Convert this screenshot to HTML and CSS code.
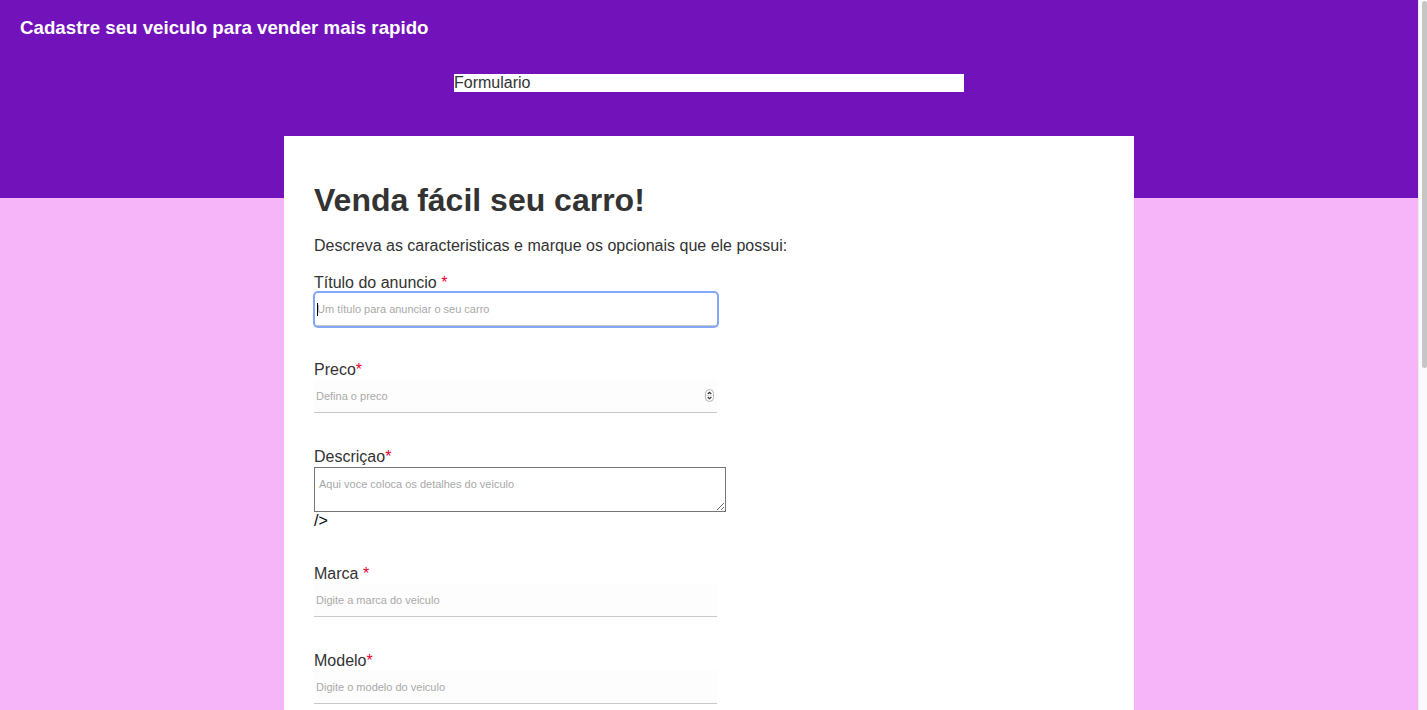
FILE: index.html
```html
<!DOCTYPE html>
<html lang="pt">
<head>
<meta charset="utf-8">
<title>Cadastro de veiculo</title>
<link rel="stylesheet" href="styles.css">
</head>
<body>
<header class="topo">
  <h3 class="topo-titulo">Cadastre seu veiculo para vender mais rapido</h3>
  <div class="topo-barra">Formulario</div>
</header>
<main class="conteudo">
  <form class="cartao">
    <h1 class="cartao-titulo">Venda fácil seu carro!</h1>
    <p class="cartao-texto">Descreva as caracteristicas e marque os opcionais que ele possui:</p>

    <div class="grupo grupo-primeiro">
      <label class="rotulo">Título do anuncio <span class="obrig">*</span></label>
      <div class="campo campo-foco"><span class="cursor"></span><input class="entrada" type="text" placeholder="Um título para anunciar o seu carro"></div>
    </div>

    <div class="grupo">
      <label class="rotulo">Preco<span class="obrig">*</span></label>
      <div class="campo">
        <input class="entrada" type="text" placeholder="Defina o preco">
        <svg class="passo" width="9" height="13" viewBox="0 0 9 13">
          <rect x="0.5" y="0.5" width="8" height="12" rx="4" fill="#fff" stroke="#b5b5b5"/>
          <path d="M2.7 5 L4.5 3.3 L6.3 5" fill="none" stroke="#333" stroke-width="1.1"/>
          <path d="M2.7 8 L4.5 9.7 L6.3 8" fill="none" stroke="#333" stroke-width="1.1"/>
          <line x1="1" y1="6.5" x2="8" y2="6.5" stroke="#e2e2e2"/>
        </svg>
      </div>
    </div>

    <div class="grupo">
      <label class="rotulo">Descriçao<span class="obrig">*</span></label>
      <textarea class="area" placeholder="Aqui voce coloca os detalhes do veiculo"></textarea>
      <div class="sobra">/&gt;</div>
    </div>

    <div class="grupo">
      <label class="rotulo">Marca <span class="obrig">*</span></label>
      <div class="campo"><input class="entrada" type="text" placeholder="Digite a marca do veiculo"></div>
    </div>

    <div class="grupo">
      <label class="rotulo">Modelo<span class="obrig">*</span></label>
      <div class="campo"><input class="entrada" type="text" placeholder="Digite o modelo do veiculo"></div>
    </div>
  </form>
</main>
<div class="rolagem" aria-hidden="true"><div class="rolagem-polegar"></div></div>
</body>
</html>
```
FILE: styles.css
```css
html {
  background: #f7b5f9;
}
body {
  margin: 0;
  padding-right: 9px;
  font-family: "Liberation Sans", Arial, Helvetica, sans-serif;
  color: #333;
  background: #f7b5f9;
}
.topo {
  background: #7212bb;
  height: 198px;
  box-sizing: border-box;
  padding: 17px 20px 0;
  display: flex;
  flex-direction: column;
}
.topo-titulo {
  margin: 0;
  color: #fff;
  font-size: 18.72px;
  line-height: 22px;
  font-weight: bold;
}
.topo-barra {
  align-self: center;
  margin-top: 35px;
  width: 510px;
  height: 18px;
  line-height: 18px;
  background: #fff;
  color: #333;
  font-size: 16px;
}
.conteudo {
  display: flex;
  justify-content: center;
  margin-top: -62px;
}
.cartao {
  width: 850px;
  min-height: 1300px;
  box-sizing: border-box;
  background: #fff;
  padding: 46px 30px 40px;
}
.cartao-titulo {
  margin: 0;
  font-size: 32px;
  line-height: 37px;
  font-weight: bold;
  color: #333;
}
.cartao-texto {
  margin: 18px 0 0;
  font-size: 16px;
  line-height: 18px;
}
.grupo {
  margin-bottom: 35px;
}
.grupo-primeiro {
  margin-top: 19px;
}
.rotulo {
  display: block;
  font-size: 16px;
  line-height: 18px;
  color: #333;
}
.obrig {
  color: #e5002b;
}
.campo {
  width: 403px;
  height: 34px;
  box-sizing: border-box;
  background: #fdfdfd;
  border-bottom: 1px solid #c9c9c9;
  display: flex;
  align-items: center;
  padding: 0 2px;
  position: relative;
}
.campo-foco {
  margin-top: 1px;
  margin-left: 1px;
  width: 402px;
  height: 33px;
  border-radius: 3px;
  box-shadow: 0 0 0 2px #82a8f7;
  background: #fff;
}
.cursor {
  position: absolute;
  left: 2px;
  top: 10px;
  width: 1px;
  height: 13px;
  background: #000;
}
.entrada {
  flex: 1;
  min-width: 0;
  border: 0;
  outline: 0;
  background: transparent;
  padding: 0;
  font-family: "Liberation Sans", Arial, Helvetica, sans-serif;
  font-size: 11px;
  color: #333;
}
.entrada::placeholder,
.area::placeholder {
  color: #a9a9a9;
}
.passo {
  margin-right: 1px;
  flex: none;
}
.area {
  display: block;
  width: 412px;
  height: 45px;
  box-sizing: border-box;
  margin: 1px 0 0;
  border: 1px solid #767676;
  padding: 10px 4px 4px;
  font-family: "Liberation Sans", Arial, Helvetica, sans-serif;
  font-size: 11px;
  resize: vertical;
}
.sobra {
  font-size: 16px;
  line-height: 18px;
  color: #000;
}
.rolagem {
  position: fixed;
  top: 0;
  right: 0;
  width: 9px;
  height: 100%;
  box-sizing: border-box;
  background: #fafafa;
  border-left: 1px solid #ececec;
  padding: 1px 0 0 3px;
}
.rolagem-polegar {
  width: 5px;
  height: 367px;
  border-radius: 3px;
  background: #c6c6c6;
}
```
